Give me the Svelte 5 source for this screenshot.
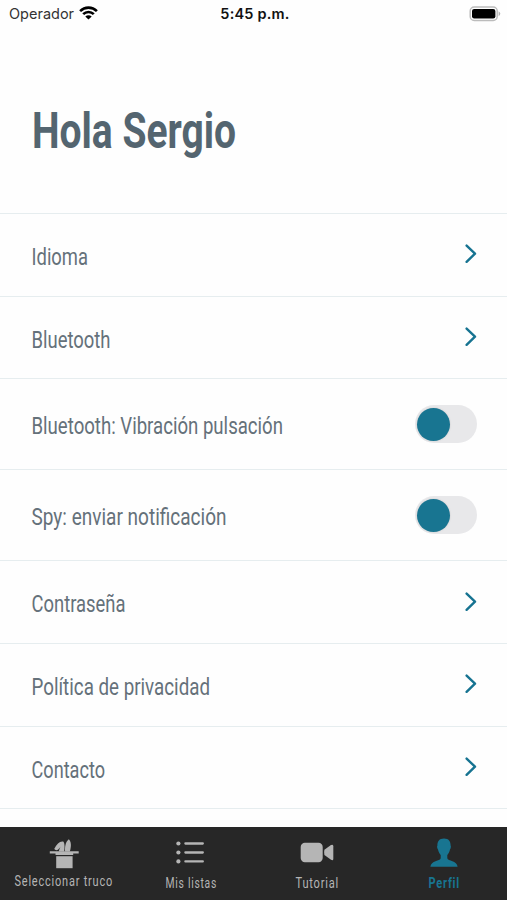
<script>
  // width = rendered width of the condensed label
  const rows = [
    { label: 'Idioma', width: 56 },
    { label: 'Bluetooth', width: 78.5 },
    { label: 'Bluetooth: Vibración pulsación', width: 251, toggle: true },
    { label: 'Spy: enviar notificación', width: 194.5, toggle: true },
    { label: 'Contraseña', width: 93.5 },
    { label: 'Política de privacidad', width: 178 },
    { label: 'Contacto', width: 73 },
  ];

  const tabs = [
    { id: 'trick', label: 'Seleccionar truco', width: 98 },
    { id: 'lists', label: 'Mis listas', width: 51 },
    { id: 'tutorial', label: 'Tutorial', width: 43 },
    { id: 'profile', label: 'Perfil', width: 31 },
  ];

  let active = $state('profile');
  let enabled = $state({});
</script>

<div class="screen">
  <header class="status">
    <div class="carrier">
      <span>Operador</span>
      <svg width="19" height="14" viewBox="0 0 19 14">
        <g fill="none" stroke="#000" stroke-width="2.6">
          <path d="M1.1 5.1C5.8 .5 13.2 .5 17.9 5.1" />
          <path d="M4.2 8.2C7.1 5.3 11.9 5.3 14.8 8.2" />
        </g>
        <path d="M6.3 10.4C8.1 8.7 10.9 8.7 12.7 10.4L9.5 13.6Z" />
      </svg>
    </div>
    <span class="time">5:45 p.m.</span>
    <svg class="battery" width="32" height="16" viewBox="0 0 32 16">
      <rect x="1.2" y="1" width="27" height="13.4" rx="4" fill="#fff" stroke="#bcbcbc" stroke-width="1.5" />
      <rect x="3" y="2.9" width="23.4" height="9.6" rx="2.2" />
      <path d="M29.6 5.2Q33 7.7 29.6 10.2Z" fill="#b2b2b2" />
    </svg>
  </header>

  <h1>
    <svg width="204" height="64">
      <text x="-1" y="47" textLength="204" lengthAdjust="spacingAndGlyphs">Hola Sergio</text>
    </svg>
  </h1>

  <main>
    {#each rows as row}
      <div class="row" class:tall={row.toggle}>
        <svg class="label" width={row.width + 2} height="32">
          <text x="-0.5" y="26" textLength={row.width + 0.5} lengthAdjust="spacingAndGlyphs">{row.label}</text>
        </svg>
        {#if row.toggle}
          <button
            class="toggle"
            class:on={enabled[row.label]}
            aria-label={row.label}
            onclick={() => (enabled[row.label] = !enabled[row.label])}
          >
            <span class="knob"></span>
          </button>
        {:else}
          <svg class="chevron" width="12" height="20" viewBox="0 0 12 20">
            <path d="M1.6 1.6L10 9.7L1.6 17.8" />
          </svg>
        {/if}
      </div>
    {/each}
  </main>

  <nav>
    {#each tabs as tab}
      <button class="tab {tab.id}" class:active={active === tab.id} onclick={() => (active = tab.id)}>
        {#if tab.id === 'trick'}
          <svg width="30" height="32" viewBox="0 0 30 32">
            <path d="M.8 13.2H29.7V15.6H24.2V17H6.5V15.6H.8Z" />
            <path d="M7.2 18.2H23.6V30.2H7.2Z" />
            <path d="M9.8 13.5C10.2 11.4 10.8 10 12 8.6L9.2 11.6C7.8 12.7 5.6 12.2 5.3 10.8C8 5.4 11.2 2.6 14.6 3.7C15.9 5.7 15.7 10 15.2 13.5Z" />
            <path d="M16.1 13.5C15.6 7.5 17 3.5 19.8 1.2C22.4 3.5 22.4 8.5 20.8 13.5Z" />
          </svg>
        {:else if tab.id === 'lists'}
          <svg width="30" height="32" viewBox="0 0 30 32">
            <circle cx="3.4" cy="5.5" r="2.1" />
            <circle cx="3.4" cy="14.5" r="2.1" />
            <circle cx="3.4" cy="23.4" r="2.1" />
            <path d="M10.4 5.5H27.8M10.4 14.5H27.8M10.4 23.4H27.8" stroke="currentColor" stroke-width="2.3" stroke-linecap="round" />
          </svg>
        {:else if tab.id === 'tutorial'}
          <svg width="36" height="32" viewBox="0 0 36 32">
            <rect x="1.7" y="4.8" width="22" height="19.4" rx="4.2" />
            <path d="M25.4 11.8L32 7.1Q34.3 5.8 34.3 8.2V20.7Q34.3 23.1 32 21.8L25.4 17.1Q24.7 14.5 25.4 11.8Z" />
          </svg>
        {:else}
          <svg width="30" height="32" viewBox="0 0 30 32">
            <path d="M15 .4C19.7 .4 21.7 3.2 21.6 7.4C22.2 8 21.9 10.4 21 11.4C20.5 14.1 19.3 15.4 18.3 17V20.3C18.8 23.1 28.1 22.6 28.6 28.8H1.4C1.9 22.6 11.2 23.1 11.7 20.3V17C10.7 15.4 9.5 14.1 9 11.4C8.1 10.4 7.8 8 8.4 7.4C8.3 3.2 10.3 .4 15 .4Z" />
          </svg>
        {/if}
        <svg class="caption" width={tab.width + 2} height="18">
          <text x="1.5" y="14" textLength={tab.width + 0.5} lengthAdjust="spacingAndGlyphs">{tab.label}</text>
        </svg>
      </button>
    {/each}
  </nav>
</div>

<style>
  :global(body) {
    margin: 0;
    background: #fefefe;
  }

  .screen {
    width: 507px;
    height: 900px;
    display: flex;
    flex-direction: column;
    overflow: hidden;
    background: #fefefe;
    font-family: Roboto, sans-serif;
  }

  .status {
    height: 27px;
    box-sizing: border-box;
    padding: 0 6px 0 9px;
    display: grid;
    grid-template-columns: 1fr auto 1fr;
    align-items: center;
    font-family: Inter, sans-serif;
    font-size: 14.5px;
    color: #111;
  }

  .carrier {
    display: flex;
    align-items: center;
    gap: 5px;
    color: #333;
  }

  .carrier svg {
    margin-bottom: 2px;
  }

  .time {
    font-weight: 600;
    letter-spacing: 0.2px;
  }

  .battery {
    justify-self: end;
  }

  svg {
    display: block;
    flex-shrink: 0;
  }

  h1 {
    height: 186px;
    box-sizing: border-box;
    margin: 0;
    padding: 74px 0 0 33px;
  }

  h1 svg {
    overflow: visible;
  }

  h1 text {
    font-size: 50px;
    font-weight: 700;
    fill: #546570;
  }

  main {
    height: 614px;
    box-sizing: border-box;
    flex-shrink: 0;
    overflow: hidden;
    border-top: 1px solid #e6edef;
  }

  .row {
    height: 82.7px;
    box-sizing: border-box;
    padding: 0 30px 0 32px;
    display: flex;
    align-items: center;
    justify-content: space-between;
    border-bottom: 1px solid #e6edef;
  }

  .row.tall {
    height: 91px;
  }

  .label {
    overflow: visible;
  }

  .label text {
    font-size: 24px;
    fill: #65717a;
  }

  .chevron {
    margin-bottom: 1px;
    fill: none;
    stroke: #167391;
    stroke-width: 2.4;
    stroke-linecap: round;
    stroke-linejoin: round;
  }

  .toggle {
    width: 62px;
    height: 38px;
    padding: 2px;
    border: 0;
    border-radius: 19px;
    background: #e8e8ea;
    display: flex;
    align-items: center;
  }

  .toggle.on {
    justify-content: flex-end;
  }

  .knob {
    width: 33px;
    height: 33px;
    border-radius: 50%;
    background: #187591;
    box-shadow: 0 0 2px rgba(0, 0, 0, 0.15);
  }

  nav {
    flex: 1;
    display: grid;
    grid-template-columns: repeat(4, 1fr);
    background: #272727;
  }

  .tab {
    padding: 11px 0 0;
    border: 0;
    background: none;
    display: flex;
    flex-direction: column;
    align-items: center;
    color: #b5b5b5;
    fill: currentColor;
    font-family: inherit;
  }

  .caption {
    margin-top: 4px;
    overflow: visible;
  }

  .caption text {
    font-size: 14px;
    letter-spacing: 1px;
  }

  .trick svg:first-child {
    margin-left: 2px;
  }

  .trick .caption {
    margin-top: 2px;
  }

  .active {
    color: #187591;
  }

  .active text {
    font-weight: 700;
  }
</style>
